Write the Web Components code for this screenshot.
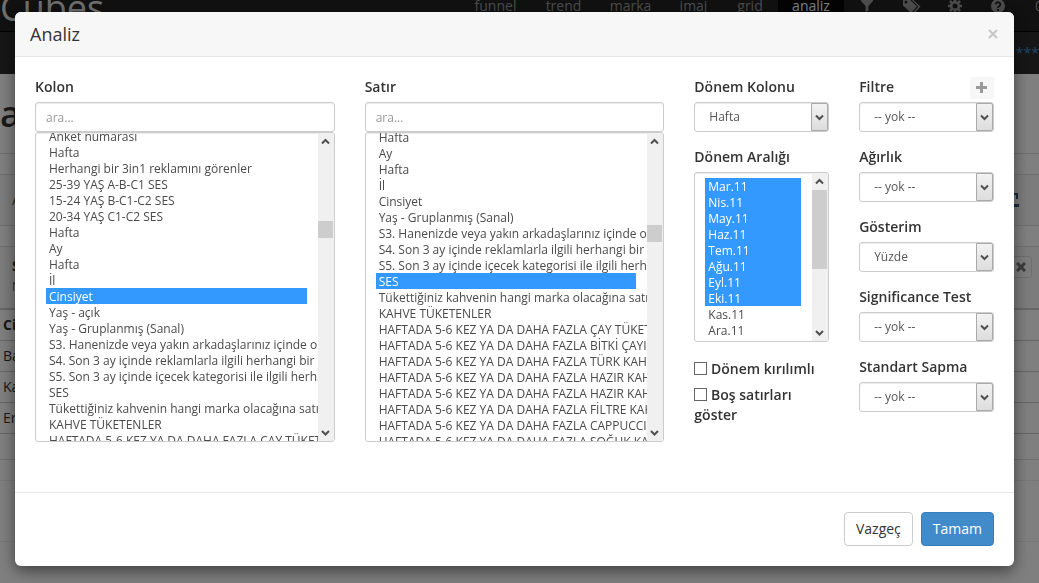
<!DOCTYPE html>
<html lang="tr">
<head>
<meta charset="utf-8">
<meta name="viewport" content="width=device-width, initial-scale=1">
<title>Analiz</title>
<style>
html, body { height: 100%; }
body { margin: 0; overflow: hidden; background: #fff; color: #333; font: 14px/20px "Open Sans", "Noto Sans", sans-serif; }
</style>
</head>
<body>
<report-page></report-page>
<modal-dialog heading="Analiz">
  <analysis-form></analysis-form>
  <action-button slot="actions" label="Vazgeç"></action-button>
  <action-button slot="actions" label="Tamam" primary></action-button>
</modal-dialog>

<template id="report-page">
  <style>
    :host { display: block; min-height: 100%; background: #fff; }
    * { box-sizing: border-box; }
    header { display: flex; height: 51px; margin-top: -19px; background: #222; border-bottom: 1px solid #000; line-height: 50px; overflow: hidden; }
    .brand { color: #ddd; font-size: 36px; line-height: 54px; text-decoration: none; }
    nav { display: grid; margin-left: auto; grid-template-columns: 71px 65px 69px 57px 56px 66px 45px 45px 42px 44px 19px; color: #999; text-align: center; }
    nav a { color: #999; text-decoration: none; display: flex; align-items: center; justify-content: center; }
    nav a.on { background: #080808; color: #fff; }
    nav a:last-child { justify-content: flex-start; padding-left: 15px; overflow: hidden; }
    .sub { height: 42px; background: #2d2d2d; color: #428bca; display: flex; justify-content: flex-end; align-items: center; line-height: 20px; }
    h1 { margin: 0; height: 79px; font-size: 36px; line-height: 80px; font-weight: 600; color: #333; overflow: hidden; }
    .band { border-top: 1px solid #ddd; height: 21px; }
    .panel { height: 51px; background: #f9f9f9; display: flex; align-items: center; justify-content: space-between; padding: 0 20px 0 12px; color: #666; }
    .group { height: 62px; align-items: flex-start; padding: 9px 7px 0 12px; font-size: 12px; }
    .group b { font-size: 14px; color: #333; }
    .group button { display: grid; place-items: center; width: 22px; height: 22px; padding: 0; border: 1px solid #ddd; border-radius: 3px; background: none; }
    table { width: 100%; border-collapse: collapse; }
    th, td { height: 31px; padding: 0 3px; border-top: 1px solid #ccc; text-align: left; line-height: 20px; }
    th { border-top: 2px solid #ccc; }
    .end { border-top: 1px solid #ccc; height: 26px; }
    .faint { border-color: #eee; }
    .tall { height: 61px; }
  </style>
  <header>
    <a class="brand" href="#">Cubes</a>
    <nav>
      <a href="#">funnel</a><a href="#">trend</a><a href="#">marka</a><a href="#">imaj</a><a href="#">grid</a><a href="#" class="on">analiz</a>
      <a href="#" aria-label="filter"><svg width="12" height="12" viewBox="0 0 12 12" fill="#999"><path d="M0 0h12v1L7.500 6v4.500L4.500 12V6L0 1z"/></svg></a>
      <a href="#" aria-label="tags"><svg width="18" height="14" viewBox="0 0 18 14" fill="#999"><path fill-rule="evenodd" d="M0 0h6l8 7.500L8 14 0 6.500zM3 1.600a1.500 1.500 0 100 3 1.500 1.500 0 000-3z"/><path d="M7.500 0H9l8.500 7.500L11.500 14l-1-1 5-5.500z"/></svg></a>
      <a href="#" aria-label="settings"><svg width="14" height="14" viewBox="0 0 14 14"><circle cx="7" cy="7" r="3.800" fill="none" stroke="#999" stroke-width="2.600"/><path stroke="#999" stroke-width="2.600" d="M7 0v2.500M7 11.500V14M0 7h2.500M11.500 7H14M2 2l1.800 1.800M10.200 10.200L12 12M12 2l-1.800 1.800M3.800 10.200L2 12"/></svg></a>
      <a href="#" aria-label="help"><svg width="14" height="14" viewBox="0 0 14 14"><circle cx="7" cy="7" r="7" fill="#999"/><path d="M4.700 5.300a2.300 2.100 0 114 1.500C7.700 7.400 7 7.600 7 8.900M7 10v2" fill="none" stroke="#222" stroke-width="1.900"/></svg></a>
      <a href="#">0</a>
    </nav>
  </header>
  <div class="sub">o ***</div>
  <h1>a</h1>
  <div class="band"></div>
  <div class="band panel"><span>A</span><svg width="10" height="14" viewBox="0 0 10 14"><path d="M4 0h5v6H7V2H4zM0 11h10v3H0z" fill="#357"/></svg></div>
  <div class="band"></div>
  <div class="band panel group"><span><b>S</b><br>N</span><button aria-label="sil"><svg width="10" height="10" viewBox="0 0 10 10"><path d="M1 1l8 8M9 1L1 9" stroke="#777" stroke-width="3"/></svg></button></div>
  <table>
    <tr><th>Ci</th></tr>
    <tr><td>Ba</td></tr><tr><td>Ka</td></tr><tr><td>Er</td></tr>
  </table>
  <div class="end"></div>
  <div class="band"></div>
  <div class="band faint tall"></div>
  <div class="band faint"></div>
</template>

<template id="modal-dialog">
  <style>
    :host { display: block; position: fixed; inset: 0; background: rgba(0, 0, 0, .5); }
    section { margin: 12px 25px 12px 15px; background: #fff; border-radius: 6px; box-shadow: 0 5px 15px rgba(0, 0, 0, .5); overflow: hidden; }
    header { display: flex; align-items: center; justify-content: space-between; height: 44px; padding: 0 15px; background: #f7f7f7; border-bottom: 1px solid #e9e9e9; }
    h2 { margin: 0; font-size: 18px; line-height: 24px; font-weight: 400; }
    header button { width: 12px; height: 20px; padding: 0; border: 0; background: none; }
    header svg { display: block; margin: auto; }
    main { padding: 20px 20px 35px; }
    footer { display: flex; justify-content: flex-end; gap: 8px; padding: 19px 20px 20px; border-top: 1px solid #e5e5e5; }
  </style>
  <section role="dialog" aria-modal="true" aria-labelledby="t">
    <header><h2 id="t"></h2><button aria-label="Kapat"><svg width="10" height="10" viewBox="0 0 10 10"><path d="M1 1l8 8M9 1L1 9" stroke="#c6c6c6" stroke-width="2"/></svg></button></header>
    <main><slot></slot></main>
    <footer><slot name="actions"></slot></footer>
  </section>
</template>

<template id="action-button">
  <style>
    :host { display: block; }
    button { height: 34px; padding: 0 11px; border: 1px solid #ccc; border-radius: 4px; background: #fff; color: #333; font: inherit; }
    :host([primary]) button { background: #428bca; border-color: #357ebd; color: #fff; }
  </style>
  <button type="button"></button>
</template>

<template id="scroll-rail">
  <style>
    :host { display: flex; flex-direction: column; width: 16px; background: #f0f0f0; }
    svg { display: block; flex: none; width: 15px; height: 17px; }
    .thumb { width: 15px; background: #cdcdcd; flex: none; }
    .after { flex: 1; }
  </style>
  <svg viewBox="0 0 15 17"><path d="M4 10.500L7.500 7l3.500 3.500" fill="none" stroke="#505050" stroke-width="2"/></svg>
  <div class="before"></div><div class="thumb"></div><div class="after"></div>
  <svg viewBox="0 0 15 17"><path d="M4 7l3.500 3.500L11 7" fill="none" stroke="#505050" stroke-width="2"/></svg>
</template>

<template id="list-field">
  <style>
    :host { display: block; margin-bottom: 15px; }
    * { box-sizing: border-box; }
    label { display: block; margin-bottom: 5px; font-weight: 600; }
    input { display: block; width: 100%; height: 30px; padding: 5px 10px; border: 1px solid #ccc; border-radius: 3px; box-shadow: inset 0 1px 1px rgba(0, 0, 0, .075); font: 12px/18px "Open Sans", "Noto Sans", sans-serif; color: #555; outline: 0; }
    input::placeholder { color: #999; }
    .box { display: flex; height: var(--list-height, 310px); border: 1px solid #ccc; border-radius: 3px; box-shadow: inset 0 1px 1px rgba(0, 0, 0, .075); overflow: hidden; }
    select { flex: 1; min-width: 0; height: 100%; margin: 0; padding: 5px 11px 5px 10px; border: 0; border-radius: 0; outline: 0; background: transparent; font: 12px/16px "Open Sans", "Noto Sans", sans-serif; color: #555; scrollbar-width: none; overflow-x: hidden; }
    select::-webkit-scrollbar { display: none; }
    option { height: 16px; min-height: 16px; padding: 0 3px; line-height: 16px; color: #4a4a4a; -webkit-text-fill-color: #4a4a4a; }
    option:checked { background-image: linear-gradient(#39f, #39f); -webkit-text-fill-color: #fff; }
  </style>
  <label></label>
  <input type="text" placeholder="ara...">
  <div class="box"><select multiple id="s"></select><scroll-rail></scroll-rail></div>
</template>

<template id="select-field">
  <style>
    :host { display: block; margin-bottom: 15px; }
    * { box-sizing: border-box; }
    .top { display: flex; justify-content: space-between; height: 20px; margin-bottom: 5px; }
    label { font-weight: 600; white-space: nowrap; }
    .box { display: grid; grid-template-columns: 1fr 18px; height: 30px; border-radius: 3px; }
    select { grid-area: 1 / 1 / 2 / 3; width: 100%; height: 30px; padding: 0 20px 0 14px; appearance: none; border: 1px solid #ccc; border-radius: 3px; background: #fff; box-shadow: inset 0 1px 1px rgba(0, 0, 0, .075); font: 12px/18px "Open Sans", "Noto Sans", sans-serif; color: #555; }
    .arrow { grid-area: 1 / 2; z-index: 1; pointer-events: none; display: grid; place-items: center; height: 28px; margin: 1px 1px 0 0; border: 1px solid #aaa; border-radius: 0 2px 2px 0; background: linear-gradient(#f2f2f2, #ddd); }
  </style>
  <div class="top"><label for="s"></label><slot></slot></div>
  <div class="box"><select id="s"></select><span class="arrow"><svg width="9" height="7" viewBox="0 0 9 7"><path d="M1 1.500L4.500 5 8 1.500" fill="none" stroke="#505050" stroke-width="2"/></svg></span></div>
</template>

<template id="check-field">
  <style>
    :host { display: block; margin-bottom: 6px; }
    label { font-weight: 600; }
    input { appearance: none; width: 13px; height: 13px; margin: 0; border: 1px solid #666; background: #fff; vertical-align: -1px; }
  </style>
  <label><input type="checkbox"> <slot></slot></label>
</template>

<template id="add-button">
  <style>
    :host { display: block; height: 22px; }
    button { display: grid; place-items: center; width: 24px; height: 22px; padding: 0; border: 0; border-radius: 2px; background: #f7f7f7; }
  </style>
  <button type="button" aria-label="Filtre ekle"><svg width="12" height="12" viewBox="0 0 12 12"><path d="M5.500 0v11M0 5.500h11" stroke="#999" stroke-width="3"/></svg></button>
</template>

<template id="analysis-form">
  <style>
    :host { display: grid; grid-template-columns: repeat(12, minmax(0, 1fr)); column-gap: 30px; align-items: start; }
    .wide { grid-column: span 4; }
    .narrow { grid-column: span 2; }
    .checks { padding-top: 2px; }
    .period { --list-height: 170px; }
  </style>
  <list-field class="wide" label="Kolon" search offset="10" thumb-start="71" thumb-size="17">
    <option>Anket numarası</option><option>Hafta</option><option>Herhangi bir 3in1 reklamını görenler</option><option>25-39 YAŞ A-B-C1 SES</option><option>15-24 YAŞ B-C1-C2 SES</option><option>20-34 YAŞ C1-C2 SES</option><option>Hafta</option><option>Ay</option><option>Hafta</option><option>İl</option><option selected>Cinsiyet</option><option>Yaş - açık</option><option>Yaş - Gruplanmış (Sanal)</option><option>S3. Hanenizde veya yakın arkadaşlarınız içinde okuyan</option><option>S4. Son 3 ay içinde reklamlarla ilgili herhangi bir araştırma</option><option>S5. Son 3 ay içinde içecek kategorisi ile ilgili herhangi</option><option>SES</option><option>Tükettiğiniz kahvenin hangi marka olacağına satın alırken</option><option>KAHVE TÜKETENLER</option><option>HAFTADA 5-6 KEZ YA DA DAHA FAZLA ÇAY TÜKETENLER</option>
  </list-field>
  <list-field class="wide" label="Satır" search offset="9" thumb-start="75" thumb-size="17">
    <option>Hafta</option><option>Ay</option><option>Hafta</option><option>İl</option><option>Cinsiyet</option><option>Yaş - Gruplanmış (Sanal)</option><option>S3. Hanenizde veya yakın arkadaşlarınız içinde okuyan</option><option>S4. Son 3 ay içinde reklamlarla ilgili herhangi bir araştırma</option><option>S5. Son 3 ay içinde içecek kategorisi ile ilgili herhangi</option><option selected>SES</option><option>Tükettiğiniz kahvenin hangi marka olacağına satın alırken</option><option>KAHVE TÜKETENLER</option><option>HAFTADA 5-6 KEZ YA DA DAHA FAZLA ÇAY TÜKETENLER</option><option>HAFTADA 5-6 KEZ YA DA DAHA FAZLA BİTKİ ÇAYI TÜKETENLER</option><option>HAFTADA 5-6 KEZ YA DA DAHA FAZLA TÜRK KAHVESİ</option><option>HAFTADA 5-6 KEZ YA DA DAHA FAZLA HAZIR KAHVE</option><option>HAFTADA 5-6 KEZ YA DA DAHA FAZLA HAZIR KAHVE</option><option>HAFTADA 5-6 KEZ YA DA DAHA FAZLA FİLTRE KAHVE</option><option>HAFTADA 5-6 KEZ YA DA DAHA FAZLA CAPPUCCINO</option><option>HAFTADA 5-6 KEZ YA DA DAHA FAZLA SOĞUK KAHVE</option>
  </list-field>
  <div class="narrow">
    <select-field label="Dönem Kolonu" options="Hafta"></select-field>
    <list-field class="period" label="Dönem Aralığı" thumb-start="0" thumb-size="79">
      <option selected>Mar.11</option><option selected>Nis.11</option><option selected>May.11</option><option selected>Haz.11</option><option selected>Tem.11</option><option selected>Ağu.11</option><option selected>Eyl.11</option><option selected>Eki.11</option><option>Kas.11</option><option>Ara.11</option>
    </list-field>
    <div class="checks">
      <check-field>Dönem kırılımlı</check-field>
      <check-field>Boş satırları göster</check-field>
    </div>
  </div>
  <div class="narrow">
    <select-field label="Filtre" options="-- yok --"><add-button></add-button></select-field>
    <select-field label="Ağırlık" options="-- yok --"></select-field>
    <select-field label="Gösterim" options="Yüzde"></select-field>
    <select-field label="Significance Test" options="-- yok --"></select-field>
    <select-field label="Standart Sapma" options="-- yok --"></select-field>
  </div>
</template>

<script>
class Base extends HTMLElement {
  connectedCallback() {
    if (this.shadowRoot) return;
    const root = this.attachShadow({ mode: 'open' });
    root.append(document.importNode(document.getElementById(this.localName).content, true));
    this.ready(root);
  }
  ready() {}
}
customElements.define('report-page', class extends Base {});
customElements.define('check-field', class extends Base {});
customElements.define('add-button', class extends Base {});
customElements.define('scroll-rail', class extends Base {
  ready(root) {
    root.querySelector('.before').style.height = this.getAttribute('start') + 'px';
    root.querySelector('.thumb').style.height = this.getAttribute('size') + 'px';
  }
});
customElements.define('action-button', class extends Base {
  ready(root) { root.querySelector('button').textContent = this.getAttribute('label'); }
});
customElements.define('select-field', class extends Base {
  ready(root) {
    root.querySelector('label').textContent = this.getAttribute('label');
    for (const text of this.getAttribute('options').split('|')) root.querySelector('select').add(new Option(text));
  }
});
customElements.define('list-field', class extends Base {
  ready(root) {
    const select = root.querySelector('select');
    const label = root.querySelector('label');
    const search = root.querySelector('input');
    label.textContent = this.getAttribute('label');
    label.htmlFor = 's';
    if (this.hasAttribute('search')) search.setAttribute('aria-label', this.getAttribute('label') + ' ara');
    else search.remove();
    select.append(...this.querySelectorAll('option'));
    const rail = document.createElement('scroll-rail');
    rail.setAttribute('start', this.getAttribute('thumb-start'));
    rail.setAttribute('size', this.getAttribute('thumb-size'));
    root.querySelector('scroll-rail').replaceWith(rail);
    const place = () => { select.scrollTop = Number(this.getAttribute('offset') || 0); };
    requestAnimationFrame(place);
    addEventListener('load', place);
  }
});
customElements.define('analysis-form', class extends Base {});
customElements.define('modal-dialog', class extends Base {
  ready(root) { root.querySelector('h2').textContent = this.getAttribute('heading'); }
});
</script>
</body>
</html>
